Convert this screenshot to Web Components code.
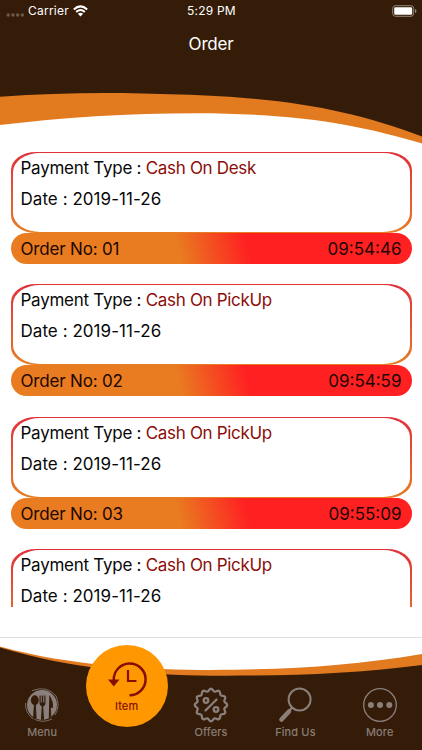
<!DOCTYPE html>
<html lang="en">
<head>
<meta charset="utf-8">
<title>Order</title>
<style>
html, body {
  margin: 0;
  height: 100%;
  overflow: hidden;
  background: #fff;
  font-family: Inter, "Liberation Sans", sans-serif;
}
</style>
</head>
<body>
<order-screen></order-screen>
<script>
'use strict'
const define = (name, html, setup) => {
  const template = document.createElement('template')
  template.innerHTML = html
  window.customElements.define(name, class extends HTMLElement {
    constructor() {
      super()
      this.attachShadow({mode: 'open'})
      this.shadowRoot.appendChild(template.content.cloneNode(true))
    }
    connectedCallback() {
      if(setup) setup(this, this.shadowRoot)
    }
  })
}

define('status-bar', `
<style>
:host {
  display: grid;
  grid-template-columns: 1fr auto 1fr;
  align-items: center;
  height: 20px;
  padding: 0 5px 0 6px;
  color: #fff;
  font-size: 12px;
  font-weight: 400;
  line-height: 21px;
}
.left {
  display: flex;
  align-items: center;
}
.carrier {
  margin: 0 4px 0 4px;
  letter-spacing: .23px;
}
.time {
  letter-spacing: .2px;
}
.battery {
  justify-self: end;
}
svg {
  display: block;
}
</style>
<div class="left">
  <svg width="18" height="20" fill="#6d5b49"><circle cx="2.200" cy="14" r="1.700"/><circle cx="7" cy="14" r="1.700"/><circle cx="11.700" cy="14" r="1.700"/><circle cx="16.300" cy="14" r="1.700"/></svg>
  <span class="carrier">Carrier</span>
  <svg width="15" height="12" viewBox="0 0 15 12" fill="none" stroke="#fff" stroke-width="2">
    <path d="M.8 4.500Q7.500-1.800 14.200 4.500M3.200 7Q7.500 3 11.800 7"/>
    <path d="M4.900 8.800Q7.500 6.500 10.100 8.800L7.500 11.500z" fill="#fff" stroke="none"/>
  </svg>
</div>
<span class="time">5:29 PM</span>
<svg class="battery" width="25" height="12" viewBox="0 0 25 12">
  <rect x=".7" y=".7" width="21" height="10.600" rx="2.800" fill="none" stroke="#96897c"/>
  <rect x="2.200" y="2.200" width="18" height="7.600" rx="1.300" fill="#fff"/>
  <path d="M23 4q1.500.5 1.500 2T23 8z" fill="#96897c"/>
</svg>
`)

define('screen-header', `
<style>
:host {
  display: block;
  height: 145px;
  position: relative;
}
.wave {
  position: absolute;
  inset: 0;
  z-index: -1;
}
h1 {
  margin: 13px 0 0;
  color: #fff;
  font-size: 17px;
  font-weight: 400;
  line-height: 22px;
  letter-spacing: -.2px;
  text-align: center;
}
</style>
<svg class="wave" width="422" height="145">
  <path d="M0 0H422V143.500C360 125 300 113.300 195 113.200C130 113.200 60 117.500 0 125z" fill="#e27a20"/>
  <path d="M0 0H422V136.500C350 110 290 98 180 94.600C115 92 60 92.500 0 96.700z" fill="#341c08"/>
</svg>
<status-bar></status-bar>
<h1><slot></slot></h1>
`)

define('order-card', `
<style>
:host {
  display: block;
  flex: none;
  height: 112px;
  color: #080808;
  font-size: 17px;
}
.frame {
  box-sizing: border-box;
  height: 81px;
  padding: 1px 2px;
  border-radius: 25px / 18px;
  background: linear-gradient(#df3039, #e45035 45%, #e67e22);
}
.body {
  box-sizing: border-box;
  height: 79px;
  padding: 0 8px;
  border-radius: 27px / 19px;
  background: #fff;
}
.row {
  height: 31px;
  line-height: 31px;
  white-space: pre;
}
.type {
  letter-spacing: -.26px;
}
.kind {
  color: #8b0d08;
  letter-spacing: -.32px;
}
.date {
  letter-spacing: .05px;
}
.bar {
  display: flex;
  justify-content: space-between;
  height: 31px;
  padding: 0 10px;
  border-radius: 15.500px;
  background: linear-gradient(76deg, #e97b20 42%, #ff2022 59%);
  color: #1c0703;
  line-height: 33px;
}
.number {
  letter-spacing: -.18px;
}
</style>
<div class="frame">
  <div class="body">
    <div class="row type">Payment Type : <span class="kind"><slot></slot></span></div>
    <div class="row date"></div>
  </div>
</div>
<div class="bar"><span class="number"></span><span class="time"></span></div>
`, (host, root) => {
  root.querySelector('.date').textContent = `Date : ${host.getAttribute('date')}`
  if(!host.hasAttribute('number')) return
  root.querySelector('.number').textContent = `Order No: ${host.getAttribute('number')}`
  root.querySelector('.time').textContent = host.getAttribute('time')
})

define('order-list', `
<style>
:host {
  display: flex;
  flex-direction: column;
  gap: 20.300px;
  box-sizing: border-box;
  height: 462px;
  padding: 7px 10.500px 0;
  overflow: hidden;
}
</style>
<slot></slot>
`)

const icons = {
  menu: `
    <circle cx="17" cy="17" r="15" fill="currentColor"/>
    <path d="M7 2.600Q22-3 31 8Q35.500 18 30 27M27 31Q17 36 7 30Q0 24 .5 15" fill="none" stroke="currentColor" stroke-width=".8"/>
    <g fill="#341c08">
      <ellipse cx="9.800" cy="12.300" rx="3.900" ry="5"/><path d="M9 16h1.800l.8 14.500-1.800 1-1.800-1z"/>
      <path d="M14.500 7.500h1.200v7h1.100v-7h1.400v7h1.100v-7h1.200v7.500q0 3-2.300 3.500l.9 13.200h-3.200l.9-13.200q-2.300-.5-2.300-3.500z"/>
      <path d="M24.300 7q4.800 7 3.400 13h-1.900l.5 8.500-2.500 1.800z"/>
    </g>`,
  offers: `
    <g fill="none" stroke="currentColor" stroke-width="2.300" stroke-linejoin="round" stroke-linecap="round">
      <path class="seal"/>
      <path d="M22.500 11.500l-11 11"/><circle cx="12" cy="12.500" r="2.300"/><circle cx="22" cy="21.500" r="2.300"/>
    </g>`,
  find: `
    <circle cx="21.600" cy="11.500" r="11" fill="none" stroke="currentColor" stroke-width="2"/>
    <path d="M14 19.500l-2.500 3" stroke="currentColor" stroke-width="2"/>
    <path d="M11 23.500L3.500 31.500" stroke="currentColor" stroke-width="4.600" stroke-linecap="round"/>`,
  more: `
    <circle cx="17" cy="17" r="16.300" fill="none" stroke="currentColor" stroke-width="1.300"/>
    <g fill="currentColor"><circle cx="7.900" cy="17" r="3"/><circle cx="17" cy="17" r="3"/><circle cx="26.300" cy="17" r="3"/></g>`,
  item: `
    <path d="M3.800 18A15.900 15.900 0 1 1 19.500 33.300" fill="none" stroke="currentColor" stroke-width="2.500"/>
    <path d="M-2 17.500h11.500L3.800 24.500z" fill="currentColor"/>
    <path d="M18 8v11h8.500" fill="none" stroke="currentColor" stroke-width="2.200"/>`
}

// wavy outline of the discount seal
const sealPath = () => {
  const point = (i, r) => {
    const a = i * Math.PI / 12 - Math.PI / 2
    return `${(17 + r * Math.cos(a)).toFixed(2)} ${(17 + r * Math.sin(a)).toFixed(2)}`
  }
  let d = `M${point(-.5, 15)}`
  for(let i = 0; i < 24; i++)
    d += `Q${point(i, i % 2 ? 12.800 : 17.600)} ${point(i + .5, 15)}`
  return `${d}z`
}

define('tab-item', `
<style>
:host {
  display: flex;
  flex: 1;
  flex-direction: column;
  align-items: center;
  color: #8a7f7a;
  font-size: 11px;
  font-weight: 400;
  line-height: 14px;
  letter-spacing: .15px;
  -webkit-text-stroke: .2px;
  padding-top: 50px;
}
:host([active]) {
  box-sizing: border-box;
  flex: none;
  width: 82px;
  height: 82px;
  margin: 7px 1.200px 0;
  padding-top: 17px;
  border-radius: 50%;
  background: #ff9800;
  color: #850f04;
}
svg {
  width: 34px;
  height: 34px;
  overflow: visible;
}
.label {
  margin-top: 3px;
}
</style>
<svg viewBox="0 0 34 34"></svg>
<span class="label"><slot></slot></span>
`, (host, root) => {
  root.querySelector('svg').innerHTML = icons[host.getAttribute('icon')]
  const seal = root.querySelector('.seal')
  if(seal) seal.setAttribute('d', sealPath())
})

define('tab-bar', `
<style>
:host {
  display: flex;
  align-items: flex-start;
  position: relative;
  height: 112px;
  border-top: 1px solid #dedede;
}
.wave {
  position: absolute;
  inset: 0;
  z-index: -1;
}
</style>
<svg class="wave" width="422" height="112">
  <path d="M0 8.500C70 28 150 32 211 32C290 31.500 350 28 422 16V112H0z" fill="#e27a20"/>
  <path d="M0 9.600C70 31 150 37.500 211 37.700C290 38 350 36 422 27V112H0z" fill="#341c08"/>
</svg>
<slot></slot>
`)

define('order-screen', `
<style>
:host {
  display: flex;
  flex-direction: column;
  position: relative;
  z-index: 0;
  width: 422px;
  height: 750px;
  overflow: hidden;
  background: #fff;
}
tab-bar {
  margin-top: auto;
}
</style>
<screen-header>Order</screen-header>
<order-list>
  <order-card number="01" date="2019-11-26" time="09:54:46">Cash On Desk</order-card>
  <order-card number="02" date="2019-11-26" time="09:54:59">Cash On PickUp</order-card>
  <order-card number="03" date="2019-11-26" time="09:55:09">Cash On PickUp</order-card>
  <order-card date="2019-11-26">Cash On PickUp</order-card>
</order-list>
<tab-bar>
  <tab-item icon="menu">Menu</tab-item>
  <tab-item icon="item" active>Item</tab-item>
  <tab-item icon="offers">Offers</tab-item>
  <tab-item icon="find">Find Us</tab-item>
  <tab-item icon="more">More</tab-item>
</tab-bar>
`)
</script>
</body>
</html>
